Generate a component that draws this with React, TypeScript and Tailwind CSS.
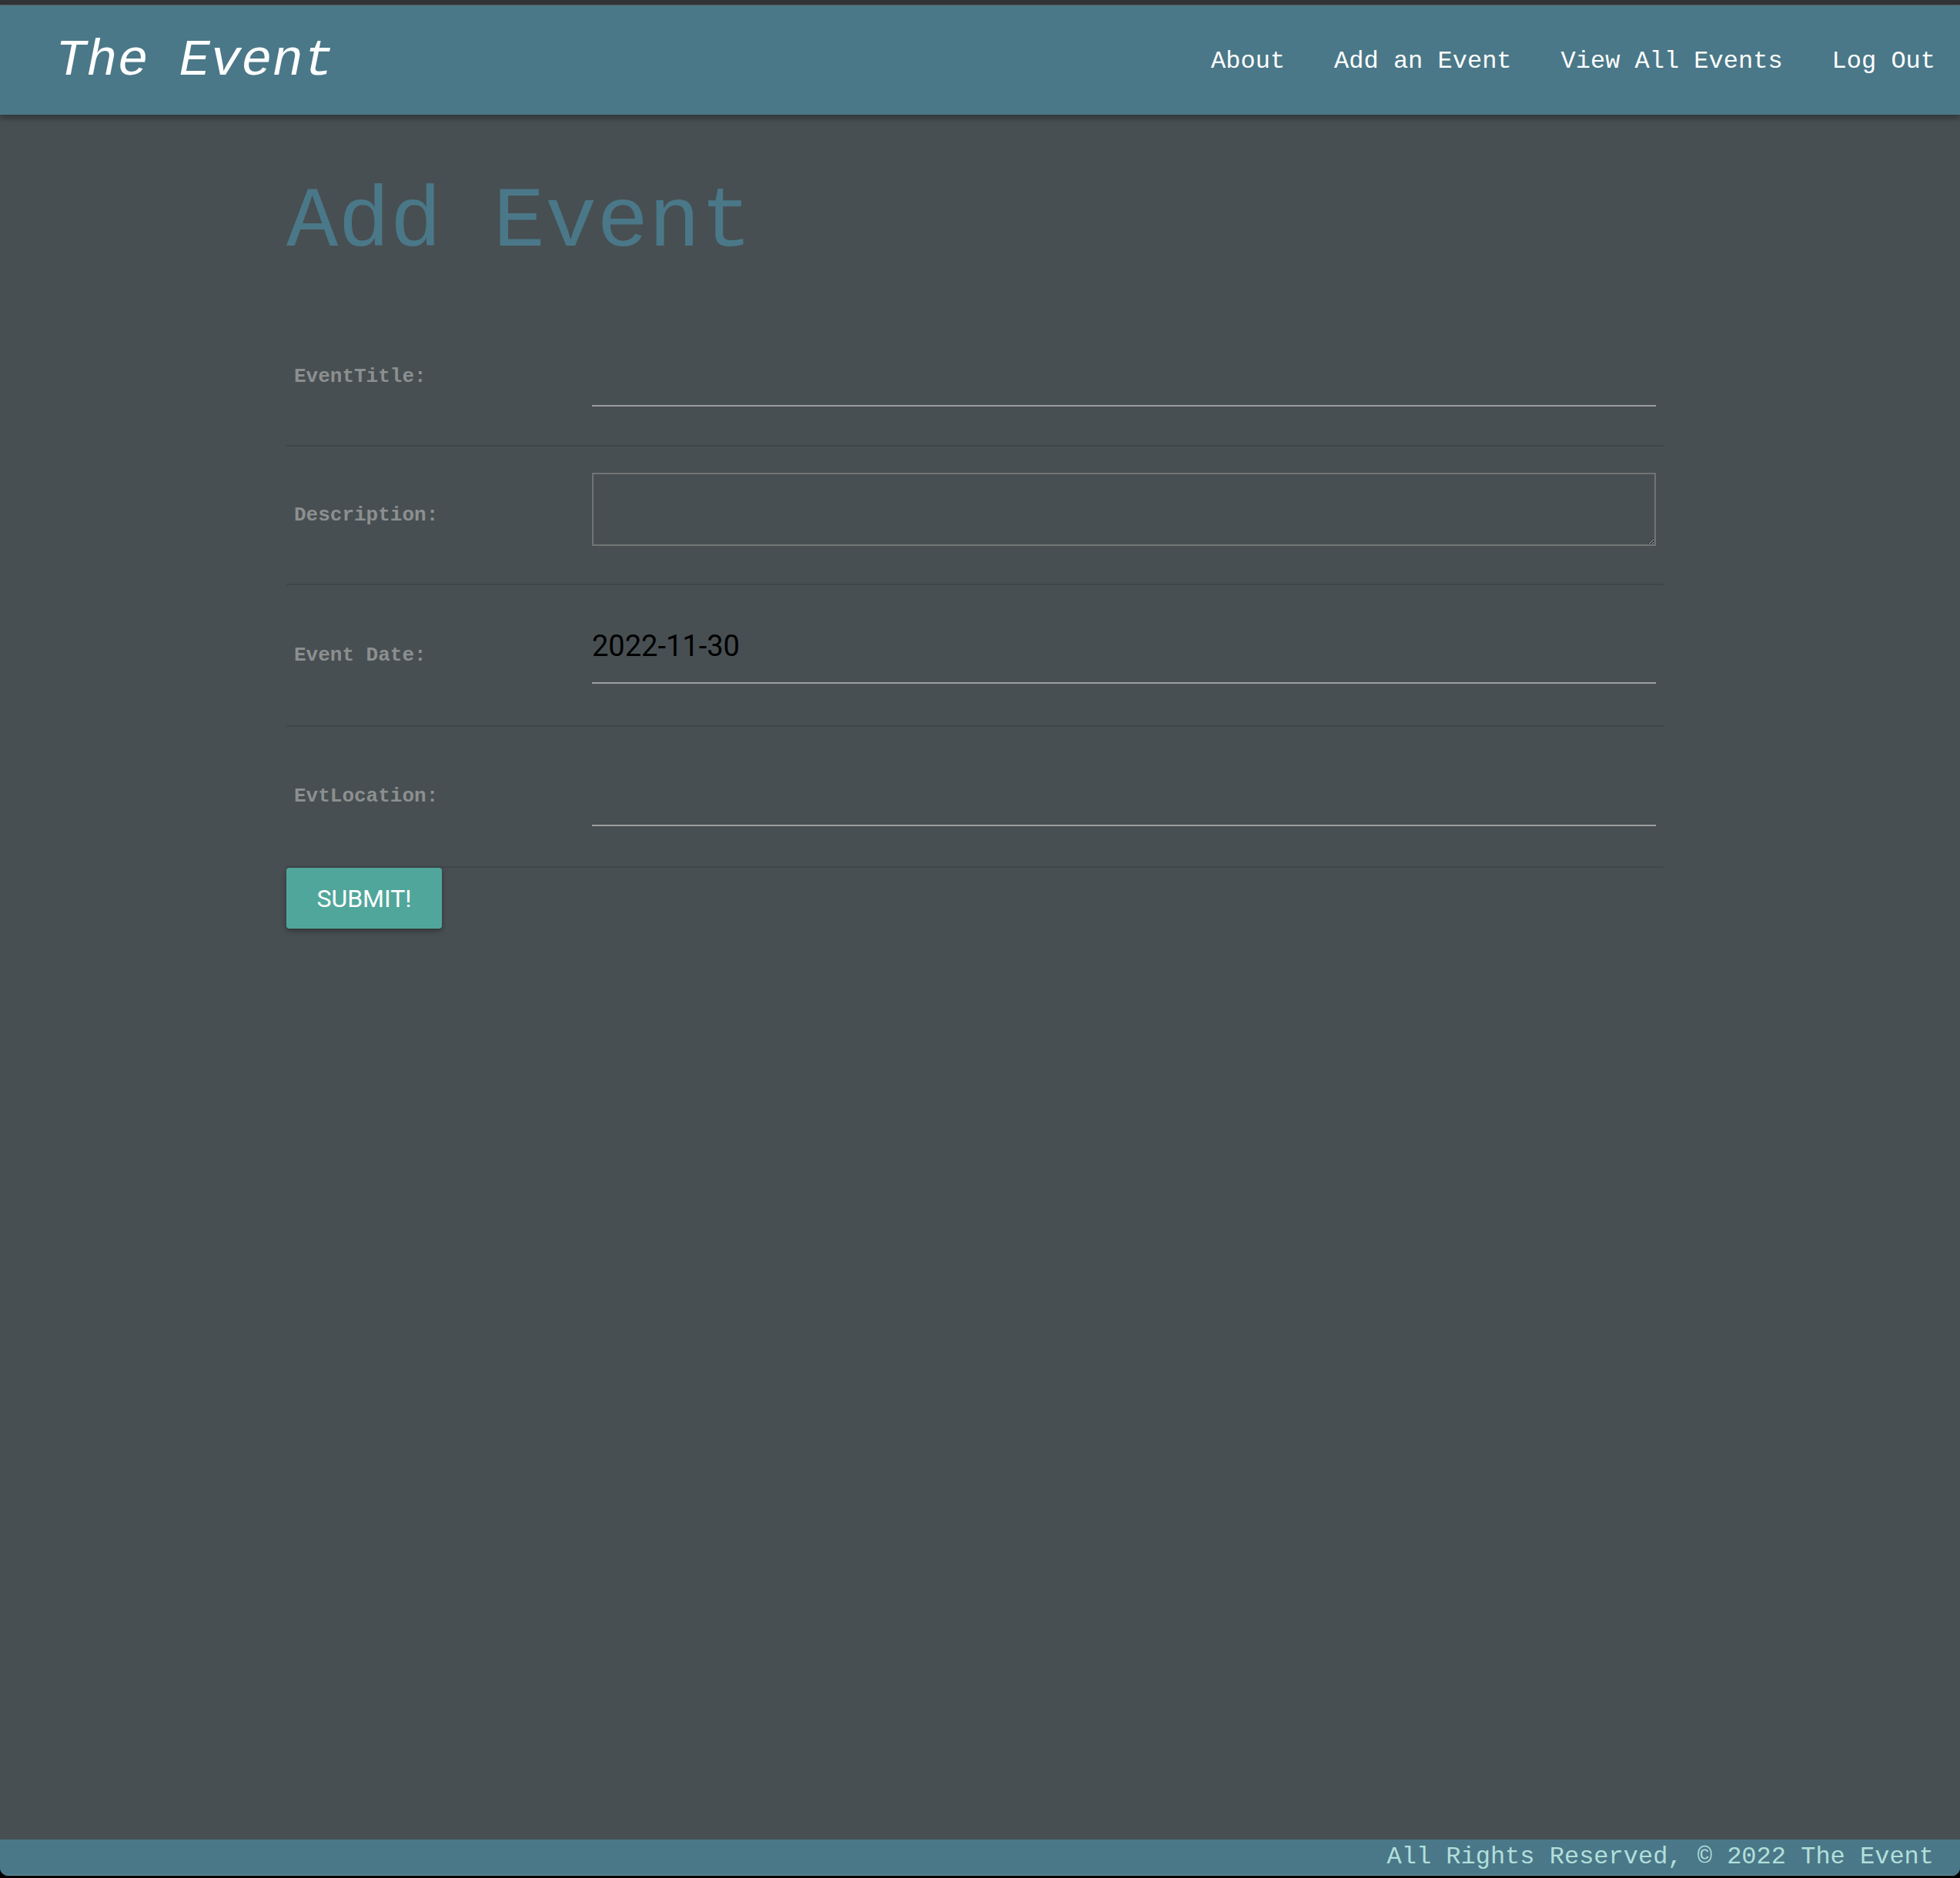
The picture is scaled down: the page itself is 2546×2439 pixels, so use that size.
export default function App() {
  const rows = [
    { label: "EventTitle:", kind: "input", value: "", pad: "pt-[32px] pb-[50px]" },
    { label: "Description:", kind: "textarea", value: "", pad: "pt-[34px] pb-[49px]" },
    { label: "Event Date:", kind: "input", value: "2022-11-30", pad: "pt-[32px] pb-[54px]" },
    { label: "EvtLocation:", kind: "input", value: "", pad: "pt-[33px] pb-[52px]" },
  ];

  return (
    <div className="min-h-[2439px] bg-black flex flex-col font-['Liberation_Mono',monospace]">
      <div className="flex-1 flex flex-col bg-[#474f52] rounded-b-[10px] overflow-hidden mb-[3px]">
        <div className="h-[7px] bg-[#323337] border-b border-[#5b5c5f]" />
        <header className="relative z-10 h-[142px] bg-[#4a7888] flex items-center justify-between shadow-[0_4px_8px_rgba(0,0,0,0.35)]">
          <a className="pl-[72px] pt-[3px] text-[67px] italic text-white leading-none">The Event</a>
          <nav className="flex items-center pt-[3px]">
            <a className="px-[32px] text-[32px] text-white">About</a>
            <a className="px-[32px] text-[32px] text-white">Add an Event</a>
            <a className="px-[32px] text-[32px] text-white">View All Events</a>
            <a className="px-[32px] text-[32px] text-white">Log Out</a>
          </nav>
        </header>

        <main className="flex-1">
          <div className="ml-[372px] w-[1789px]">
            <h1 className="mt-[85px] mb-[54px] text-[112px] leading-none text-[#4a7888]">Add Event</h1>

            <form>
              {rows.map((r) => (
                <div key={r.label} className="flex items-center border-b-2 border-[#3f4649]">
                  <label className="w-[387px] px-[10px] text-[26px] font-bold text-[#8c8f90]">{r.label}</label>
                  <div className={`flex-1 px-[10px] ${r.pad}`}>
                    {r.kind === "textarea" ? (
                      <textarea className="block w-full h-[95px] border-2 border-[#717475] bg-transparent outline-none" />
                    ) : (
                      <input
                        type="text"
                        readOnly
                        value={r.value}
                        className="block w-full h-[96px] border-b-2 border-[#9e9e9e] bg-transparent outline-none text-[38px] text-black font-['Roboto',sans-serif]"
                      />
                    )}
                  </div>
                </div>
              ))}
              <button
                type="button"
                className="w-[202px] h-[79px] rounded-[4px] bg-[#51a69b] text-white text-[32px] font-['Roboto',sans-serif] shadow-[0_3px_6px_rgba(0,0,0,0.35)]"
              >
                SUBMIT!
              </button>
            </form>
          </div>
        </main>

        <footer className="h-[47px] bg-[#4a7888] flex items-center justify-end pr-[34px] border-b border-[#6a93a0]">
          <p className="text-[32px] text-[#b2dfdb] leading-none">All Rights Reserved, © 2022 The Event</p>
        </footer>
      </div>
    </div>
  );
}
